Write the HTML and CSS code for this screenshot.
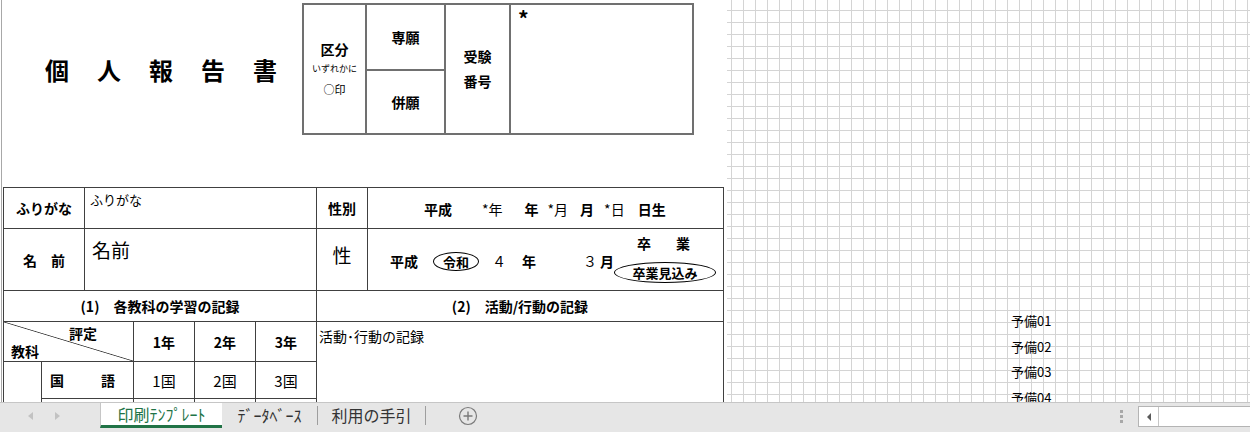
FILE: index.html
```html
<!DOCTYPE html>
<html lang="ja">
<head>
<meta charset="utf-8">
<title>個人報告書</title>
<link rel="stylesheet" href="styles.css">
</head>
<body>
<div class="sheet">
  <div class="page">
    <div class="top">
      <div class="title"><span>個</span><span>人</span><span>報</span><span>告</span><span>書</span></div>
      <div class="kbox">
        <div class="kb kb-kubun">
          <div class="kb-l">区分</div>
          <div class="kb-s">いずれかに</div>
          <div class="kb-m">○印</div>
        </div>
        <div class="kb kb-sen">専願</div>
        <div class="kb kb-hei">併願</div>
        <div class="kb kb-juken"><div>受験</div><div>番号</div></div>
        <div class="kb kb-num">*</div>
      </div>
    </div>
    <div class="form">
      <div class="c lbl lbl-furi">ふりがな</div>
      <div class="c val-furi">ふりがな</div>
      <div class="c lbl lbl-sex">性別</div>
      <div class="c date">
        <span class="b d1">平成</span>
        <span class="r d2">*年</span>
        <span class="b d3">年</span>
        <span class="r d4">*月</span>
        <span class="b d5">月</span>
        <span class="r d6">*日</span>
        <span class="b d7">日生</span>
      </div>

      <div class="c lbl lbl-name">名　前</div>
      <div class="c val-name">名前</div>
      <div class="c val-sex">性</div>
      <div class="c grad">
        <div class="grad-left">
          <span class="b">平成</span>
          <span class="oval oval-era">令和</span>
          <span class="r g4">４</span>
          <span class="b gy">年</span>
          <span class="r g3">３</span>
          <span class="b gm">月</span>
        </div>
        <div class="grad-right">
          <div class="sotsu"><span>卒</span><span>業</span></div>
          <span class="oval oval-mikomi">卒業見込み</span>
        </div>
      </div>

      <div class="c lbl h1">(1)　各教科の学習の記録</div>
      <div class="c lbl h2">(2)　活動/行動の記録</div>

      <div class="c hdr">
        <span class="hdr-top">評定</span>
        <span class="hdr-bot">教科</span>
      </div>
      <div class="c lbl y1">1年</div>
      <div class="c lbl y2">2年</div>
      <div class="c lbl y3">3年</div>
      <div class="c act">活動･行動の記録</div>

      <div class="c grp"></div>
      <div class="c kokugo"><span>国</span><span>語</span></div>
      <div class="c sc s1">1国</div>
      <div class="c sc s2">2国</div>
      <div class="c sc s3">3国</div>

      <div class="c blank-subj"></div>
      <div class="c blank b1"></div>
      <div class="c blank b2"></div>
      <div class="c blank b3"></div>
    </div>
  </div>
  <div class="cells">
    <div class="yobi-list">
      <div>予備01</div>
      <div>予備02</div>
      <div>予備03</div>
      <div>予備04</div>
    </div>
  </div>
</div>
<div class="tabbar">
  <div class="nav">
    <span class="arrow-left"></span>
    <span class="arrow-right"></span>
  </div>
  <div class="tab active">印刷ﾃﾝﾌﾟﾚｰﾄ</div>
  <div class="tab tab-db">ﾃﾞｰﾀﾍﾞｰｽ</div>
  <div class="sep"></div>
  <div class="tab tab-guide">利用の手引</div>
  <div class="sep"></div>
  <div class="add">
    <svg width="20" height="20" viewBox="0 0 20 20"><circle cx="10" cy="10" r="8.5" fill="none" stroke="#7a7a7a" stroke-width="1.2"/><path d="M10 5.5v9M5.5 10h9" stroke="#7a7a7a" stroke-width="1.4"/></svg>
  </div>
  <div class="right">
    <div class="dots"><span></span><span></span><span></span></div>
    <div class="hscroll">
      <div class="hs-btn"><span class="hs-tri"></span></div>
    </div>
  </div>
</div>
</body>
</html>
```

FILE: styles.css
```css
html, body {
  margin: 0;
  padding: 0;
}
body {
  width: 1250px;
  height: 432px;
  overflow: hidden;
  background: #fff;
  color: #000;
  font-family: "Noto Sans CJK JP", "Noto Sans", sans-serif;
}

/* ---------- sheet area ---------- */
.sheet {
  display: flex;
  height: 402px;
  overflow: hidden;
}
.page {
  flex: none;
  width: 726px;
  margin-left: 1px;
  border-left: 1px solid #a8a8a8;
  box-sizing: border-box;
  background: #fff;
}
.cells {
  flex: 1;
  background-color: #fff;
  background-image:
    linear-gradient(to right, #d4d4d4 1px, transparent 1px),
    linear-gradient(to bottom, #d4d4d4 1px, transparent 1px);
  background-size: 12px 12px;
  background-position: 4px 10px;
}
.yobi-list {
  padding: 308px 0 0 284px;
  font-size: 13px;
  line-height: 25.6px;
  white-space: nowrap;
}

/* ---------- top: title + box ---------- */
.top {
  display: flex;
  height: 187px;
}
.title {
  flex: none;
  width: 300px;
  box-sizing: border-box;
  padding-left: 43px;
  margin-top: 55px;
  height: 30px;
  display: flex;
  gap: 28px;
  font-size: 24px;
  line-height: 30px;
  font-weight: 700;
}
.kbox {
  align-self: flex-start;
  margin-top: 3px;
  display: grid;
  grid-template-columns: 61px 77px 63px 181px;
  grid-template-rows: 64px 62px;
  gap: 2px;
  padding: 2px;
  background: #707070;
}
.kb {
  background: #fff;
  display: flex;
  flex-direction: column;
  align-items: center;
  justify-content: center;
  font-size: 14px;
  font-weight: 700;
  white-space: nowrap;
}
.kb-kubun { grid-column: 1; grid-row: 1 / 3; }
.kb-l { line-height: 20px; }
.kb-s { line-height: 20px; font-size: 9px; font-weight: 400; }
.kb-m { line-height: 20px; font-size: 11px; font-weight: 400; }
.kb-sen { grid-column: 2; grid-row: 1; }
.kb-hei { grid-column: 2; grid-row: 2; }
.kb-juken { grid-column: 3; grid-row: 1 / 3; line-height: 25px; }
.kb-num {
  grid-column: 4;
  grid-row: 1 / 3;
  justify-content: flex-start;
  align-items: flex-start;
  padding: 2px 0 0 7px;
  font-size: 21px;
  line-height: 22px;
}

/* ---------- main form ---------- */
.form {
  margin-left: 1px;
  width: max-content;
  display: grid;
  grid-template-columns: 37px 42px 48px 60px 60px 60px 50px 355px;
  grid-template-rows: 40px 61px 30px 39px 36px 40px;
  gap: 1px;
  padding: 1px;
  background: #404040;
}
.c {
  background: #fff;
  font-size: 14px;
  box-sizing: border-box;
  white-space: nowrap;
}
.c span { flex: none; }
.lbl {
  display: flex;
  align-items: center;
  justify-content: center;
  font-weight: 700;
}
.b { font-weight: 700; }
.r { font-weight: 400; }

.lbl-furi { grid-column: 1 / 3; grid-row: 1; }
.val-furi {
  grid-column: 3 / 7;
  grid-row: 1;
  font-size: 13px;
  line-height: 16px;
  padding: 4px 0 0 5px;
}
.lbl-sex { grid-column: 7; grid-row: 1; }
.date {
  grid-column: 8;
  grid-row: 1;
  display: flex;
  align-items: center;
  padding-left: 56px;
  padding-top: 2px;
}
.d2 { margin-left: 30px; }
.d3 { margin-left: 22px; }
.d4 { margin-left: 9px; }
.d5 { margin-left: 12px; }
.d6 { margin-left: 10px; }
.d7 { margin-left: 13px; }

.lbl-name { grid-column: 1 / 3; grid-row: 2; }
.val-name {
  grid-column: 3 / 7;
  grid-row: 2;
  font-size: 19px;
  line-height: 26px;
  padding: 8px 0 0 7px;
}
.val-sex {
  grid-column: 7;
  grid-row: 2;
  font-size: 19px;
  line-height: 26px;
  text-align: center;
  padding-top: 13px;
}
.grad {
  grid-column: 8;
  grid-row: 2;
  display: flex;
  padding: 0 7px 0 22px;
}
.grad-left {
  flex: none;
  display: flex;
  align-items: center;
  margin-top: 3px;
}
.oval {
  display: flex;
  align-items: center;
  justify-content: center;
  border: 1px solid #000;
  border-radius: 50%;
  box-sizing: border-box;
  font-weight: 700;
  font-size: 13px;
}
.oval-era {
  width: 46px;
  height: 19px;
  margin-left: 15px;
}
.g4 { margin-left: 13px; }
.gy { margin-left: 16px; }
.g3 { margin-left: 47px; }
.gm { margin-left: 3px; }
.grad-right {
  margin-left: auto;
  display: flex;
  flex-direction: column;
  align-items: center;
  padding-top: 5px;
}
.sotsu {
  display: flex;
  gap: 25px;
  font-weight: 700;
  line-height: 18px;
  margin-left: -3px;
}
.oval-mikomi {
  width: 102px;
  height: 21px;
  margin-top: 10px;
}

.h1 { grid-column: 1 / 7; grid-row: 3; }
.h2 { grid-column: 7 / 9; grid-row: 3; }

.hdr {
  grid-column: 1 / 4;
  grid-row: 4;
  display: flex;
  flex-direction: column;
  justify-content: space-between;
  padding: 2px 0 1px 0;
  font-weight: 700;
  line-height: 18px;
  background: linear-gradient(to top right, #fff calc(50% - 0.8px), #404040 50%, #fff calc(50% + 0.8px));
}
.hdr-top { margin-left: 65px; }
.hdr-bot { margin-left: 7px; }
.y1 { grid-column: 4; grid-row: 4; }
.y2 { grid-column: 5; grid-row: 4; }
.y3 { grid-column: 6; grid-row: 4; }
.act {
  grid-column: 7 / 9;
  grid-row: 4 / 7;
  font-size: 14px;
  line-height: 18px;
  padding: 5px 0 0 2px;
}
.grp { grid-column: 1; grid-row: 5 / 7; }
.kokugo {
  grid-column: 2 / 4;
  grid-row: 5;
  display: flex;
  align-items: center;
  justify-content: space-between;
  padding: 0 18px 0 8px;
  font-weight: 700;
}
.sc {
  display: flex;
  align-items: center;
  justify-content: center;
  font-size: 15px;
  grid-row: 5;
}
.s1 { grid-column: 4; }
.s2 { grid-column: 5; }
.s3 { grid-column: 6; }
.blank-subj { grid-column: 2 / 4; grid-row: 6; }
.b1 { grid-column: 4; grid-row: 6; }
.b2 { grid-column: 5; grid-row: 6; }
.b3 { grid-column: 6; grid-row: 6; }

/* ---------- tab bar ---------- */
.tabbar {
  height: 30px;
  box-sizing: border-box;
  border-top: 1px solid #c6c6c6;
  background: #e6e6e6;
  display: flex;
  align-items: flex-start;
  font-size: 16px;
  color: #333;
  white-space: nowrap;
}
.nav {
  width: 100px;
  height: 25px;
  display: flex;
  align-items: center;
  padding-left: 28px;
  box-sizing: border-box;
  gap: 22px;
}
.arrow-left {
  width: 0;
  height: 0;
  border-top: 4px solid transparent;
  border-bottom: 4px solid transparent;
  border-right: 5px solid #c2c2c2;
}
.arrow-right {
  width: 0;
  height: 0;
  border-top: 4px solid transparent;
  border-bottom: 4px solid transparent;
  border-left: 5px solid #c2c2c2;
}
.tab {
  height: 25px;
  line-height: 25px;
  text-align: center;
  box-sizing: border-box;
}
.active {
  width: 122px;
  background: #fff;
  border-left: 1px solid #c6c6c6;
  border-bottom: 3px solid #217346;
  line-height: 22px;
  color: #217346;
}
.tab-db { width: 95px; }
.tab-guide { width: 107px; }
.sep {
  width: 1px;
  height: 19px;
  margin-top: 3px;
  background: #9e9e9e;
}
.add {
  margin-left: 32px;
  height: 25px;
  display: flex;
  align-items: center;
}
.add svg { display: block; }
.right {
  margin-left: auto;
  display: flex;
  align-items: center;
  height: 27px;
}
.dots {
  display: flex;
  flex-direction: column;
  gap: 2px;
}
.dots span {
  width: 3px;
  height: 3px;
  background: #a8a8a8;
}
.hscroll {
  margin-left: 15px;
  width: 112px;
  height: 21px;
  box-sizing: border-box;
  border: 1px solid #b4b4b4;
  border-right: none;
  background: #fff;
  display: flex;
}
.hs-btn {
  width: 19px;
  border-right: 1px solid #c6c6c6;
  display: flex;
  align-items: center;
  justify-content: center;
}
.hs-tri {
  width: 0;
  height: 0;
  border-top: 4px solid transparent;
  border-bottom: 4px solid transparent;
  border-right: 4px solid #5a5a5a;
}
```
